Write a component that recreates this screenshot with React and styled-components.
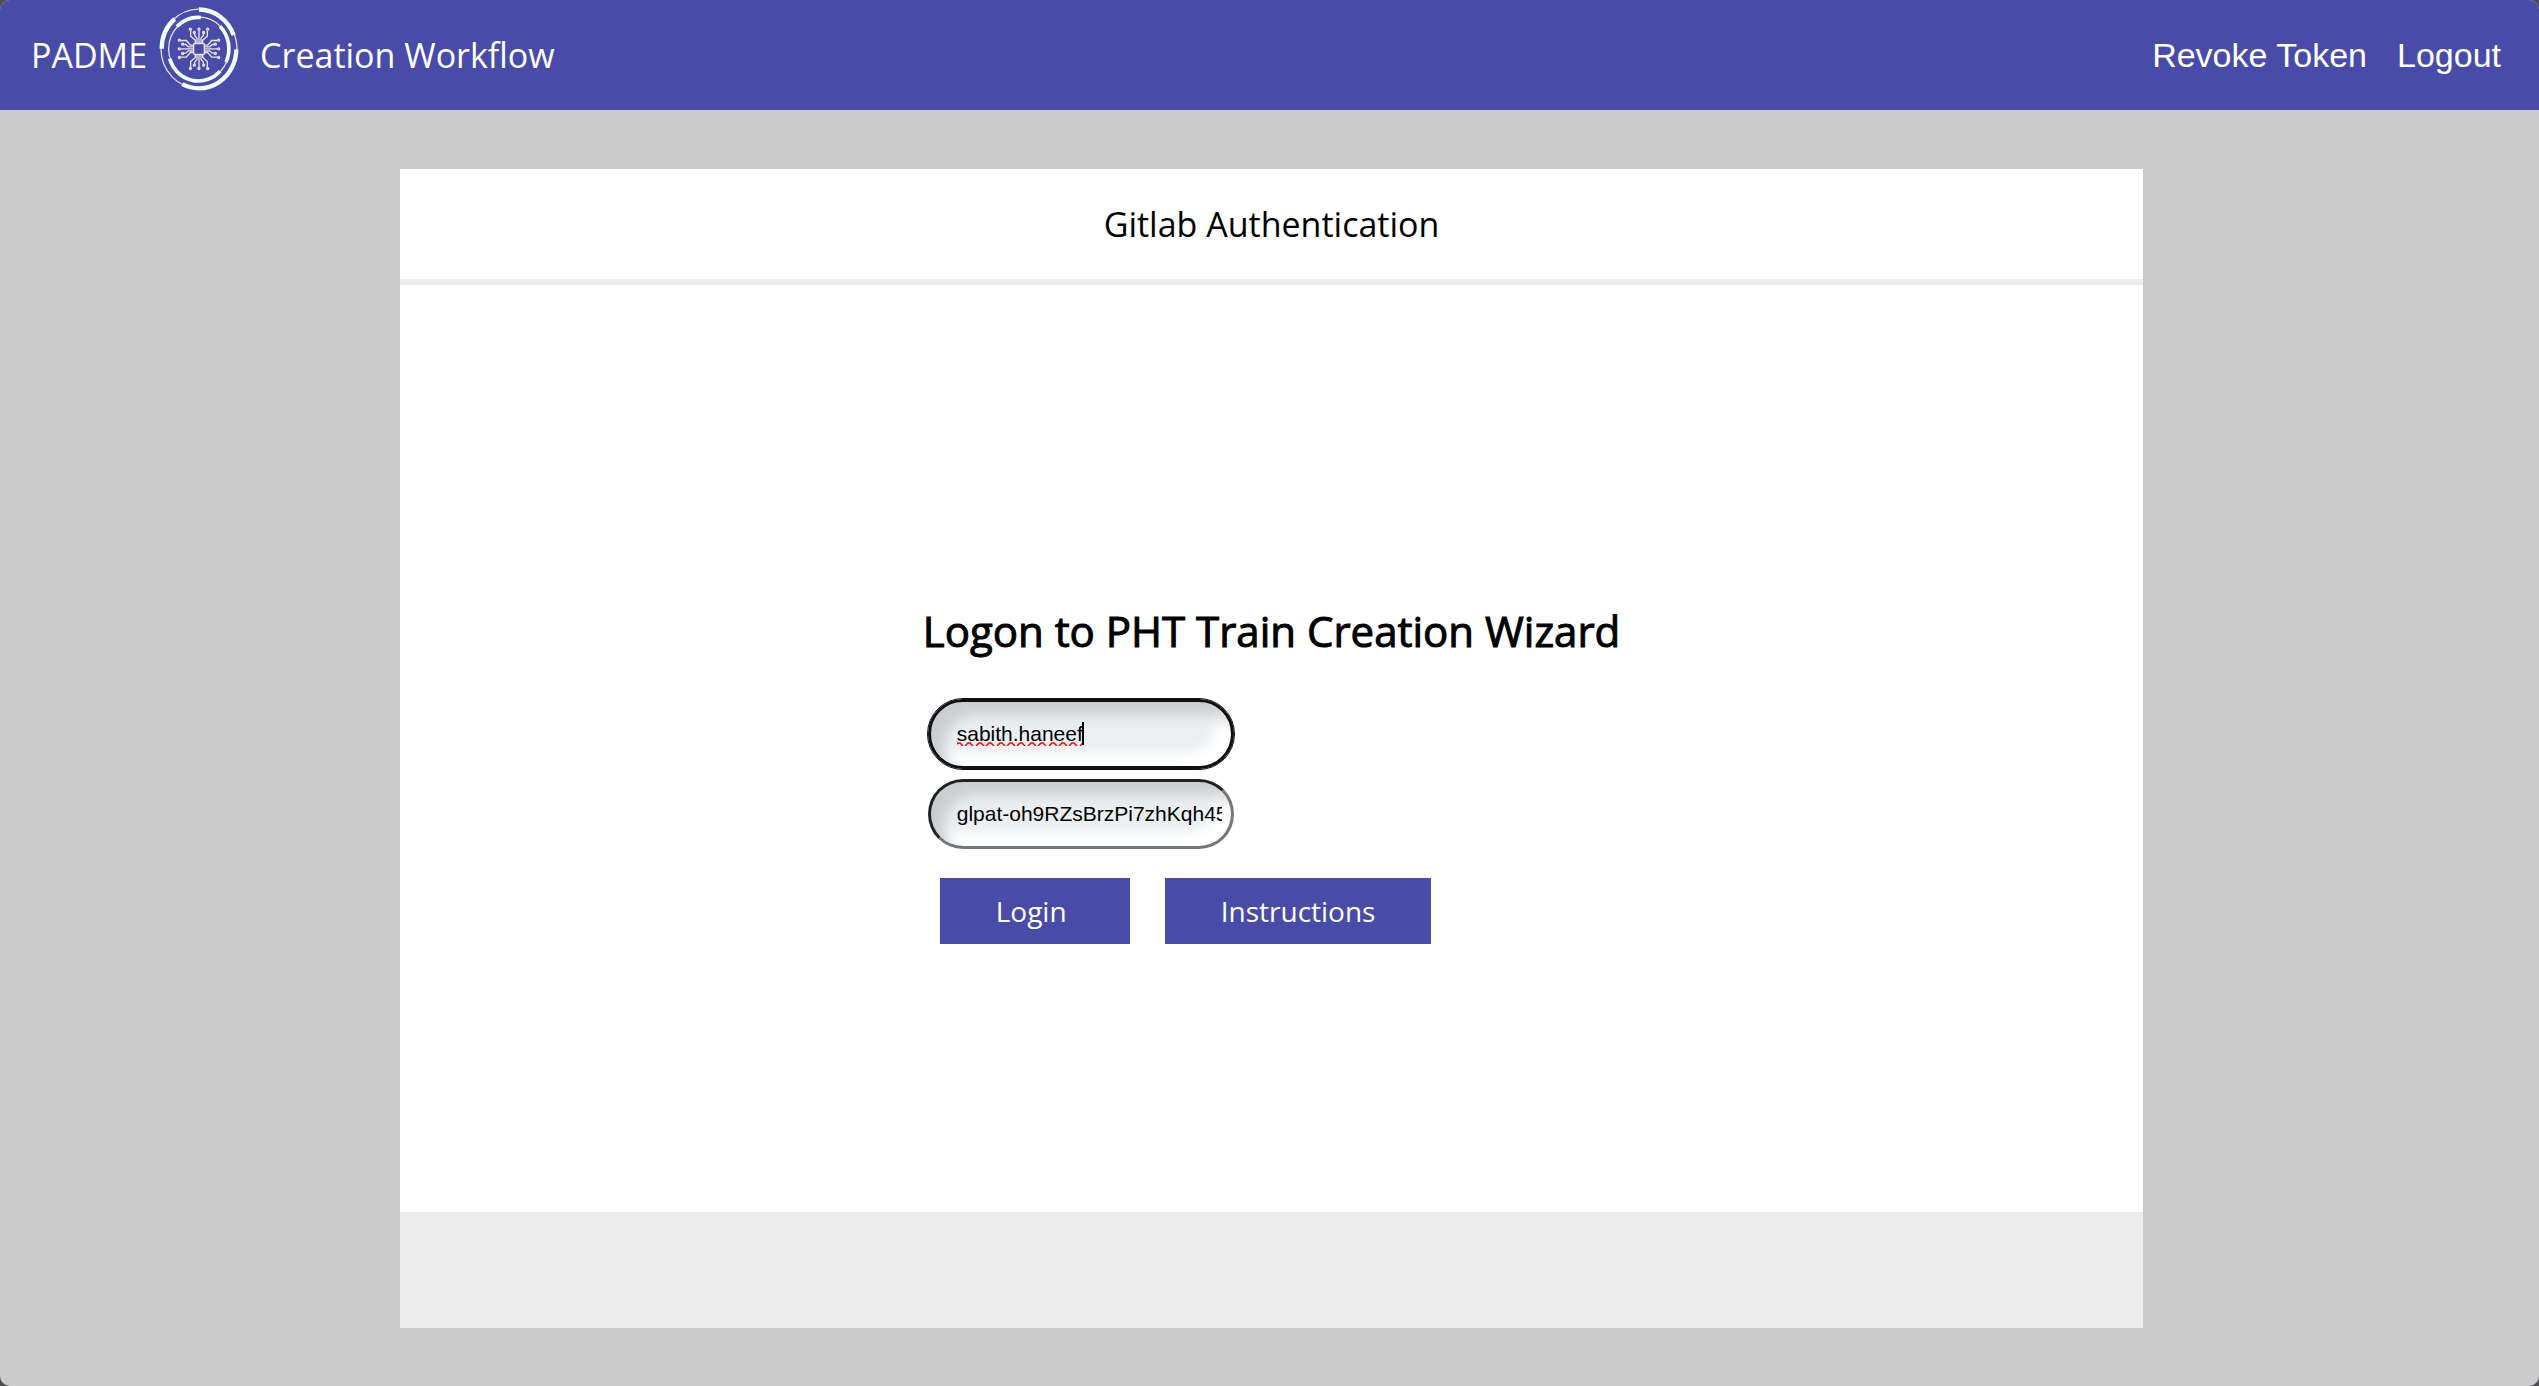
import React, { useState } from 'react'
import styled, { createGlobalStyle } from 'styled-components'

const GlobalStyle = createGlobalStyle`
  * {
    box-sizing: border-box;
  }
  body {
    margin: 0;
    background-color: #4f4f53;
    font-family: 'Open Sans', sans-serif;
    color: #000;
  }
`

const Page = styled.div`
  display: flex;
  flex-direction: column;
  min-height: 100vh;
  background-color: #cacaca;
  border-radius: 10px;
  overflow: hidden;
`

const TopBar = styled.header`
  display: flex;
  justify-content: space-between;
  align-items: center;
  height: 110px;
  padding: 0 38px 0 31px;
  background-color: #494ba9;
  color: #fff;
`

const Brand = styled.div`
  display: flex;
  align-items: center;
  font-size: 34px;
  line-height: 46px;
`

const Logo = styled.svg`
  width: 80px;
  height: 86px;
  margin: 0 21px 12px 12px;
`

const Nav = styled.nav`
  display: flex;
  gap: 30px;
`

const NavLink = styled.a`
  font-family: 'Liberation Sans', Arial, sans-serif;
  font-size: 34px;
  line-height: 40px;
  color: #fff;
  text-decoration: none;
`

const Main = styled.main`
  display: flex;
  flex: 1;
  padding: 59px 396px 58px 400px;
`

const Card = styled.section`
  display: flex;
  flex: 1;
  flex-direction: column;
  background-color: #fff;
`

const CardTitle = styled.div`
  height: 116px;
  padding-top: 32px;
  border-bottom: 6px solid #ededed;
  font-size: 34px;
  line-height: 46px;
  text-align: center;
`

const CardBody = styled.div`
  display: flex;
  flex: 1;
  justify-content: center;
  align-items: center;
  padding-top: 48px;
`

const CardFooter = styled.div`
  height: 116px;
  background-color: #ededed;
`

const Form = styled.form`
  display: flex;
  flex-direction: column;
  align-items: flex-start;
`

const Heading = styled.h1`
  margin: 0 0 38px;
  font-size: 42px;
  font-weight: 400;
  line-height: 60px;
  -webkit-text-stroke: 1px #000;
`

const Fields = styled.div`
  display: flex;
  flex-direction: column;
  gap: 10px;
  padding-left: 5px;
`

const Field = styled.label`
  display: block;
  position: relative;
`

const TextInput = styled.input`
  display: block;
  width: 306px;
  height: 70px;
  padding: 0 9px 0 26px;
  border: 3px solid;
  border-color: ${(props) => (props.$active ? '#101010' : '#212121 #767676 #767676 #212121')};
  border-radius: 35px;
  outline: ${(props) => (props.$active ? '1px solid #101010' : 'none')};
  background-color: #ebeff2;
  box-shadow: inset 13px 13px 13px #cbced1, inset -13px -13px 13px #fff;
  font-family: 'Liberation Sans', Arial, sans-serif;
  font-size: 21px;
  color: #000;
`

const Squiggle = styled.svg`
  position: absolute;
  left: 29px;
  top: 43px;
  width: 126px;
  height: 4px;
`

const Caret = styled.span`
  position: absolute;
  left: 154px;
  top: 23px;
  width: 2px;
  height: 23px;
  background-color: #000;
`

const Buttons = styled.div`
  display: flex;
  gap: 35px;
  padding: 29px 0 0 17px;
`

const Button = styled.button`
  min-width: 190px;
  height: 66px;
  padding: 0 56px;
  border: none;
  background-color: #494ba9;
  font-family: inherit;
  font-size: 28px;
  line-height: 38px;
  text-align: left;
  color: #fff;
  cursor: pointer;
`

// the traces on one side of the chip
const Traces = ({ angle }) => (
  <g transform={`translate(148 148) rotate(${angle})`}>
    <path d="M0 -16V-56M-11 -16V-26L-25 -38V-56M11 -16V-26L25 -38V-56M-6 -16V-32L-13 -40V-46M6 -16V-32L13 -40V-46" />
    <circle cx="0" cy="-59" r="3" />
    <circle cx="-26" cy="-59" r="3" />
    <circle cx="26" cy="-59" r="3" />
    <circle cx="-14" cy="-49" r="3" />
    <circle cx="14" cy="-49" r="3" />
  </g>
)

const PadmeLogo = () => (
  <Logo viewBox="28 20 240 257" fill="none" aria-hidden="true">
    <g stroke="#ead9ea" strokeWidth="4">
      <ellipse cx="148" cy="148" rx="114" ry="119" />
      <ellipse cx="148" cy="148" rx="91" ry="95" />
    </g>
    <g stroke="#f1fcfd" strokeWidth="13">
      <path d="M148 30A112 118 0 0 1 252 107" />
      <path d="M75 58A112 118 0 0 0 36 148" />
      <path d="M98 254A112 118 0 0 0 260 150" />
    </g>
    <g stroke="#f1fcfd" strokeWidth="11">
      <path d="M82 81A90 95 0 0 1 154 54" />
      <path d="M211 80A90 95 0 0 1 229 188" />
      <path d="M60 178A90 95 0 0 0 211 215" />
    </g>
    <g stroke="#ece0f2" strokeWidth="4">
      <rect x="132" y="132" width="32" height="33" rx="4" />
      <Traces angle={0} />
      <Traces angle={90} />
      <Traces angle={180} />
      <Traces angle={270} />
    </g>
  </Logo>
)

const peaks = Array.from({ length: 13 }, (_, i) => Math.round(2 + i * 10.4))

const SpellingMark = () => (
  <Squiggle viewBox="0 0 126 4" fill="none" stroke="#f00" strokeWidth="1.5" aria-hidden="true">
    {peaks.map((x) => (
      <path key={x} d={`M${x - 4} 4L${x - 1} 1H${x + 1}L${x + 4} 4`} />
    ))}
  </Squiggle>
)

const App = () => {
  const [username, setUsername] = useState('sabith.haneef')
  const [token, setToken] = useState('glpat-oh9RZsBrzPi7zhKqh45')

  return (
    <Page>
      <GlobalStyle />
      <TopBar>
        <Brand>
          <span>PADME</span>
          <PadmeLogo />
          <span>Creation Workflow</span>
        </Brand>
        <Nav>
          <NavLink href="#revoke">Revoke Token</NavLink>
          <NavLink href="#logout">Logout</NavLink>
        </Nav>
      </TopBar>
      <Main>
        <Card>
          <CardTitle>Gitlab Authentication</CardTitle>
          <CardBody>
            <Form onSubmit={(e) => e.preventDefault()}>
              <Heading>Logon to PHT Train Creation Wizard</Heading>
              <Fields>
                <Field>
                  <TextInput
                    $active
                    type="text"
                    aria-label="Username"
                    value={username}
                    onChange={(e) => setUsername(e.target.value)}
                  />
                  <SpellingMark />
                  <Caret />
                </Field>
                <Field>
                  <TextInput
                    type="text"
                    aria-label="Access token"
                    value={token}
                    onChange={(e) => setToken(e.target.value)}
                  />
                </Field>
              </Fields>
              <Buttons>
                <Button type="submit">Login</Button>
                <Button type="button">Instructions</Button>
              </Buttons>
            </Form>
          </CardBody>
          <CardFooter />
        </Card>
      </Main>
    </Page>
  )
}

export default App
